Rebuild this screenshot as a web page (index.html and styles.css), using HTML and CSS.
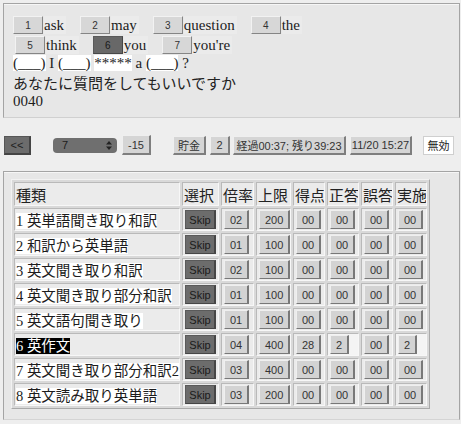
FILE: index.html
```html
<!DOCTYPE html>
<html lang="ja">
<head>
<meta charset="utf-8">
<title>Quiz</title>
<link rel="stylesheet" href="styles.css">
</head>
<body>
<div class="q-panel">
  <div class="words">
    <span class="item"><button class="wbtn">1</button><span class="word">ask</span></span>
    <span class="item"><button class="wbtn">2</button><span class="word">may</span></span>
    <span class="item"><button class="wbtn">3</button><span class="word">question</span></span>
    <span class="item"><button class="wbtn">4</button><span class="word">the</span></span>
  </div>
  <div class="words row2">
    <span class="item"><button class="wbtn">5</button><span class="word">think</span></span>
    <span class="item"><button class="wbtn wbtn-on">6</button><span class="word">you</span></span>
    <span class="item"><button class="wbtn">7</button><span class="word">you're</span></span>
  </div>
  <div class="blanks"><span class="blank">(___)</span> I <span class="blank">(___)</span> <span class="blank">*****</span> a <span class="blank">(___)</span> ?</div>
  <div class="ja">あなたに質問をしてもいいですか</div>
  <div class="num">0040</div>
</div>

<div class="controls">
  <button class="cbtn cbtn-dark back">&lt;&lt;</button>
  <div class="sel"><span>7</span>
    <svg class="arrows" width="6" height="9" viewBox="0 0 6 9"><path d="M3 0 L6 3.5 L0 3.5 Z M3 9 L6 5.5 L0 5.5 Z" fill="#222"/></svg>
  </div>
  <button class="cbtn minus">-15</button>
  <button class="cbtn save">貯金</button>
  <button class="cbtn two">2</button>
  <button class="cbtn timer">経過00:37; 残り39:23</button>
  <button class="cbtn date">11/20 15:27</button>
  <button class="cbtn cbtn-white off">無効</button>
</div>

<div class="t-panel">
  <table class="grid">
    <colgroup>
      <col class="c-kind"><col class="c-sel"><col class="c-rate"><col class="c-max"><col class="c-pt"><col class="c-ok"><col class="c-ng"><col class="c-done">
    </colgroup>
    <thead>
      <tr><th>種類</th><th>選択</th><th>倍率</th><th>上限</th><th>得点</th><th>正答</th><th>誤答</th><th>実施</th></tr>
    </thead>
    <tbody>
      <tr><td><span class="kind">1 英単語聞き取り和訳</span></td><td><button class="tb skip">Skip</button></td><td><button class="tb">02</button></td><td><button class="tb">200</button></td><td><button class="tb">00</button></td><td><button class="tb">00</button></td><td><button class="tb">00</button></td><td><button class="tb">00</button></td></tr>
      <tr><td><span class="kind">2 和訳から英単語</span></td><td><button class="tb skip">Skip</button></td><td><button class="tb">01</button></td><td><button class="tb">100</button></td><td><button class="tb">00</button></td><td><button class="tb">00</button></td><td><button class="tb">00</button></td><td><button class="tb">00</button></td></tr>
      <tr><td><span class="kind">3 英文聞き取り和訳</span></td><td><button class="tb skip">Skip</button></td><td><button class="tb">02</button></td><td><button class="tb">100</button></td><td><button class="tb">00</button></td><td><button class="tb">00</button></td><td><button class="tb">00</button></td><td><button class="tb">00</button></td></tr>
      <tr><td><span class="kind">4 英文聞き取り部分和訳</span></td><td><button class="tb skip">Skip</button></td><td><button class="tb">01</button></td><td><button class="tb">100</button></td><td><button class="tb">00</button></td><td><button class="tb">00</button></td><td><button class="tb">00</button></td><td><button class="tb">00</button></td></tr>
      <tr><td><span class="kind">5 英文語句聞き取り</span></td><td><button class="tb skip">Skip</button></td><td><button class="tb">01</button></td><td><button class="tb">100</button></td><td><button class="tb">00</button></td><td><button class="tb">00</button></td><td><button class="tb">00</button></td><td><button class="tb">00</button></td></tr>
      <tr><td><span class="kind kind-on">6 英作文</span></td><td><button class="tb skip">Skip</button></td><td><button class="tb">04</button></td><td><button class="tb">400</button></td><td><button class="tb">28</button></td><td class="light"><button class="tb">2</button></td><td><button class="tb">00</button></td><td class="light"><button class="tb">2</button></td></tr>
      <tr><td><span class="kind">7 英文聞き取り部分和訳2</span></td><td><button class="tb skip">Skip</button></td><td><button class="tb">03</button></td><td><button class="tb">400</button></td><td><button class="tb">00</button></td><td><button class="tb">00</button></td><td><button class="tb">00</button></td><td><button class="tb">00</button></td></tr>
      <tr><td><span class="kind">8 英文読み取り英単語</span></td><td><button class="tb skip">Skip</button></td><td><button class="tb">03</button></td><td><button class="tb">200</button></td><td><button class="tb">00</button></td><td><button class="tb">00</button></td><td><button class="tb">00</button></td><td><button class="tb">00</button></td></tr>
    </tbody>
  </table>
</div>
</body>
</html>
```

FILE: styles.css
```css
* { box-sizing: border-box; }

html, body {
  margin: 0;
  padding: 0;
}

body {
  width: 461px;
  height: 424px;
  overflow: hidden;
  background: #eeeeee;
  font-family: "Liberation Serif", "Noto Sans CJK JP", serif;
  font-size: 15px;
  color: #1c1c1c;
}

button {
  margin: 0;
  font-family: "Liberation Sans", "Noto Sans CJK JP", sans-serif;
  cursor: default;
}

/* ---------- question panel ---------- */
.q-panel {
  margin: 3px 0 0 3px;
  width: 457px;
  height: 115px;
  border: 1px solid #a4a4a4;
  border-bottom-color: #d0d0d0;
  box-shadow: inset 0 1px 0 #f6f6f6;
  background: #e7e7e7;
  padding: 12px 0 0 9px;
}

.words {
  display: flex;
  gap: 14px;
  height: 18px;
  line-height: 18px;
}

.row2 {
  margin-top: 2px;
  padding-left: 2px;
}

.item {
  display: flex;
  align-items: center;
  gap: 1px;
}

.wbtn {
  width: 30px;
  height: 18px;
  padding: 0;
  font-size: 10px;
  color: #333;
  background: #d7d7d7;
  border: 1px solid;
  border-color: #f2f2f2 #858585 #858585 #f2f2f2;
}

.wbtn-on {
  background: #686868;
  border-color: #5a5a5a #474747 #474747 #5a5a5a;
  color: #1a1a1a;
}

.word {
  background: #ebebeb;
  padding-right: 2px;
}

.blanks {
  height: 18px;
  line-height: 18px;
}

.blank {
  background: #ffffff;
}

.ja {
  height: 22px;
  line-height: 22px;
  font-family: "Noto Sans CJK JP", sans-serif;
  font-size: 15px;
  color: #222;
}

.num {
  height: 15px;
  line-height: 15px;
}

/* ---------- controls ---------- */
.controls {
  display: flex;
  align-items: center;
  height: 20px;
  margin: 17px 0 0 4px;
}

.cbtn {
  height: 19px;
  padding: 0;
  font-size: 11px;
  color: #333;
  background: #d5d5d5;
  border: 1px solid;
  border-color: #efefef #7e7e7e #7e7e7e #efefef;
  border-right-width: 2px;
  border-bottom-width: 2px;
}

.cbtn-dark {
  background: #6c6c6c;
  border-color: #565656 #444 #444 #565656;
  color: #1e1e1e;
}

.cbtn-white {
  background: #ffffff;
  border: 1px solid #cfcfcf;
  color: #222;
}

.back { width: 27px; }
.minus { width: 29px; margin-left: 5px; height: 20px; }
.save { width: 33px; margin-left: 22px; }
.two { width: 20px; margin-left: 4px; }
.timer { width: 113px; margin-left: 3px; }
.date { width: 62px; margin-left: 4px; }
.off { width: 31px; margin-left: 11px; }

.sel {
  display: flex;
  align-items: center;
  justify-content: space-between;
  width: 64px;
  height: 15px;
  margin-left: 22px;
  padding: 0 5px 0 9px;
  border-radius: 4px;
  background: #6f6f6f;
  font-family: "Liberation Sans", sans-serif;
  font-size: 11px;
  color: #1c1c1c;
}

/* ---------- table panel ---------- */
.t-panel {
  margin: 16px 0 0 3px;
  width: 457px;
  height: 249px;
  border: 1px solid #a4a4a4;
  border-bottom-color: #d4d4d4;
  box-shadow: inset 0 1px 0 #f6f6f6;
  background: #e7e7e7;
  padding: 7px 0 0 7px;
}

.grid {
  table-layout: fixed;
  width: 419px;
  border-collapse: separate;
  border-spacing: 2px;
  border: 1px solid;
  border-color: #f2f2f2 #a9a9a9 #a9a9a9 #f2f2f2;
  background: #d9d9d9;
}

.c-kind { width: 166px; }
.c-sel { width: 37px; }
.c-rate { width: 33px; }
.c-max { width: 35px; }
.c-pt { width: 32px; }
.c-ok { width: 32px; }
.c-ng { width: 32px; }
.c-done { width: 32px; }

.grid th,
.grid td {
  padding: 0 0 0 1px;
  border: 1px solid;
  border-color: #b9b9b9 #f7f7f7 #f7f7f7 #b9b9b9;
  background: #ebebeb;
  text-align: left;
  white-space: nowrap;
  overflow: hidden;
}

.grid th {
  height: 24px;
  font-weight: normal;
  font-size: 15px;
  color: #222;
}

.grid td {
  height: 23px;
  padding-left: 2px;
}

.grid td:first-child {
  padding-left: 1px;
}

.grid td.light {
  background: #f4f4f4;
}

.kind {
  background: #ffffff;
  color: #1c1c1c;
  font-size: 14.5px;
}

.kind-on {
  background: #000000;
  color: #ffffff;
}

.tb {
  display: block;
  height: 19px;
  padding: 0 5px;
  font-size: 11px;
  color: #333;
  background: #d3d3d3;
  border: 1px solid;
  border-color: #efefef #787878 #787878 #efefef;
  border-right-width: 2px;
}

.skip {
  width: 31px;
  padding: 0;
  background: #6c6c6c;
  border-color: #5a5a5a #464646 #464646 #5a5a5a;
  color: #1a1a1a;
}
```
